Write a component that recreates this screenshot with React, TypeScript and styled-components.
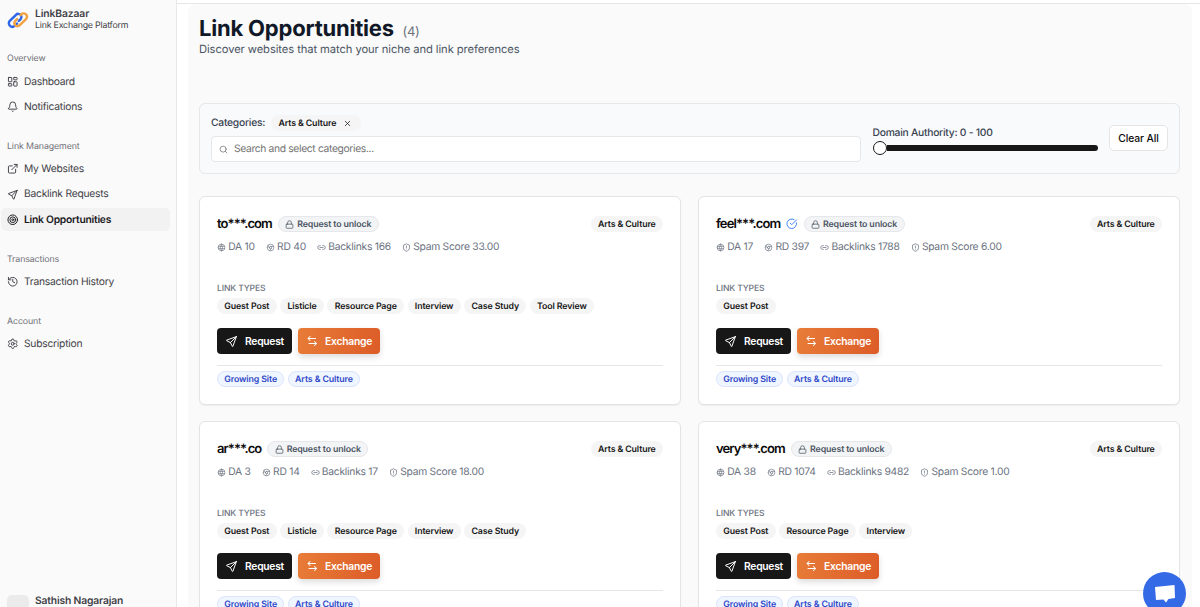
import React from 'react';
import styled, { createGlobalStyle, css } from 'styled-components';
import { Bell, CircleCheckBig, ExternalLink, LayoutDashboard, Link2, Lock, Search, Settings, ShieldAlert, Target, History, X } from 'lucide-react';
import { TbWorld, TbBrandChrome, TbSend } from 'react-icons/tb';

const GlobalStyle = createGlobalStyle`
  * {
    box-sizing: border-box;
  }
  body {
    margin: 0;
    overflow: hidden;
    font-family: Inter, 'Liberation Sans', sans-serif;
    font-size: 10.3px;
    letter-spacing: -0.25px;
    text-rendering: geometricPrecision;
    color: #0a0a0a;
    background: #fff;
  }
  svg {
    flex-shrink: 0;
  }
`;

const Layout = styled.div`
  display: flex;
  width: 1200px;
  height: 607px;
  overflow: hidden;
`;

const Sidebar = styled.aside`
  width: 177px;
  flex-shrink: 0;
  display: flex;
  flex-direction: column;
  background: #fafafa;
  border-right: 1px solid #e8e8ea;
`;

const Brand = styled.div`
  display: flex;
  align-items: center;
  gap: 6px;
  height: 39px;
  padding-left: 7px;
`;

const BrandText = styled.div`
  line-height: 12px;
  color: #3f3f46;
`;

const BrandName = styled.div`
  font-size: 10.3px;
  font-weight: 600;
  letter-spacing: -0.1px;
`;

const BrandTagline = styled.div`
  font-size: 8.8px;
  letter-spacing: -0.2px;
`;

const NavGroup = styled.div<{ $height: number }>`
  height: ${p => p.$height}px;
  padding: 9px 6px 0 1px;
`;

const NavLabel = styled.div`
  height: 22px;
  line-height: 22px;
  padding-left: 6px;
  font-size: 8.8px;
  letter-spacing: -0.1px;
  color: #707078;
`;

const NavItem = styled.div<{ $active?: boolean }>`
  display: flex;
  align-items: center;
  gap: 5.5px;
  height: 23px;
  margin-bottom: 2.4px;
  padding-left: 6px;
  border-radius: 5px;
  font-size: 10.3px;
  color: #3f3f46;
  ${p => p.$active && css`
    background: #f2f2f3;
    color: #18181b;
    font-weight: 600;
  `}
`;

const User = styled.div`
  display: flex;
  gap: 6px;
  height: 12px;
  margin-top: auto;
  padding-left: 7px;
  font-weight: 600;
  letter-spacing: -0.15px;
  line-height: 13px;
  color: #3f3f46;
`;

const Avatar = styled.div`
  width: 22px;
  height: 22px;
  border-radius: 5px;
  background: #ebebec;
`;

const Content = styled.div`
  flex: 1;
  min-width: 0;
  display: flex;
  flex-direction: column;
  border-top: 3px solid #fff;
  padding-right: 8px;
`;

const Main = styled.main`
  flex: 1;
  margin-left: 11px;
  padding: 12px 12px 0 11px;
  background: #fafafa;
  border-radius: 8px 8px 0 0;
`;

const TopLine = styled.div`
  flex-shrink: 0;
  height: 1px;
  margin-right: -8px;
  background: #e6e6e8;
`;

const Heading = styled.div`
  display: flex;
  align-items: baseline;
  gap: 8.5px;
  height: 26px;
`;

const Title = styled.h1`
  margin: 0;
  font-size: 22px;
  line-height: 26px;
  font-weight: 700;
  letter-spacing: -0.2px;
  color: #111827;
`;

const Count = styled.span`
  font-size: 13px;
  letter-spacing: -0.25px;
  color: #6b7280;
`;

const Subtitle = styled.div`
  height: 61px;
  font-size: 11.2px;
  line-height: 15px;
  letter-spacing: -0.08px;
  color: #4b5563;
`;

const Filters = styled.section`
  display: flex;
  align-items: center;
  height: 71px;
  padding: 0 11px;
  border: 1px solid #e5e7eb;
  border-radius: 6px;
  background: #f9fafb;
`;

const CategoryField = styled.div`
  width: 650px;
  flex-shrink: 0;
`;

const CategoryRow = styled.div`
  display: flex;
  align-items: center;
  gap: 7px;
  height: 16px;
  margin-bottom: 5px;
`;

const FieldLabel = styled.div`
  font-weight: 500;
  line-height: 14px;
  color: #374151;
`;

const SearchBox = styled.div`
  display: flex;
  align-items: center;
  gap: 6px;
  height: 26px;
  padding-left: 7px;
  border: 1px solid #e5e7eb;
  border-radius: 4px;
  background: #fff;
  letter-spacing: -0.35px;
  color: #737373;
`;

const RangeField = styled.div`
  flex: 1;
  margin: 4px 11px 0 11.5px;
`;

const Slider = styled.div`
  display: flex;
  align-items: center;
  height: 14px;
  margin-top: 1px;
`;

const Thumb = styled.div`
  width: 14px;
  height: 14px;
  border: 1.5px solid #171717;
  border-radius: 50%;
  background: #fff;
`;

const Track = styled.div`
  flex: 1;
  height: 6px;
  border-radius: 0 3px 3px 0;
  background: #171717;
`;

const ClearButton = styled.button`
  width: 59px;
  height: 26px;
  margin-top: -1px;
  padding: 0;
  border: 1px solid #e5e5e5;
  border-radius: 5px;
  background: #fff;
  font: 500 10.3px Inter, sans-serif;
  letter-spacing: -0.1px;
  color: #0a0a0a;
`;

const CardGrid = styled.div`
  display: grid;
  grid-template-columns: 482px 482px;
  grid-auto-rows: 209px;
  gap: 16px 17px;
  margin-top: 22px;
`;

const Card = styled.article`
  padding: 17px 17px 0;
  border: 1px solid #e4e4e7;
  border-radius: 6px;
  background: #fff;
  box-shadow: 0 1px 1px rgba(0, 0, 0, 0.05);
`;

const CardHeader = styled.div`
  display: flex;
  align-items: center;
  height: 20px;
`;

const Domain = styled.div`
  margin-right: 6px;
  font-size: 13px;
  font-weight: 600;
  letter-spacing: -0.9px;
`;

const Verified = styled(CircleCheckBig)`
  margin-right: 6px;
  color: #3b82f6;
`;

const Pill = styled.span<{ $tone?: 'blue' | 'lock' }>`
  display: inline-flex;
  align-items: center;
  gap: 3px;
  height: 16px;
  padding: 0 6.3px;
  border: 1px solid transparent;
  border-radius: 8px;
  font-size: 8.8px;
  font-weight: 600;
  letter-spacing: -0.12px;
  white-space: nowrap;
  color: #171717;
  background: #f5f5f5;
  ${p => p.$tone === 'blue' && css`
    color: #3048c8;
    background: #eff6ff;
    border-color: #dbe4fb;
  `}
  ${p => p.$tone === 'lock' && css`
    color: #4b5563;
    background: #f3f4f6;
    border-color: #e5e7eb;
  `}
`;

const FilterPill = styled(Pill)`
  gap: 7px;
  margin-left: -1px;
  padding-right: 8px;
`;

const CardCategory = styled(Pill)`
  margin-left: auto;
`;

const Stats = styled.div`
  display: flex;
  align-items: center;
  gap: 11px;
  height: 14px;
  margin-top: 6px;
  letter-spacing: -0.26px;
  color: #6b7280;
`;

const Stat = styled.span`
  display: flex;
  align-items: center;
  gap: 2.3px;
  white-space: nowrap;
`;

const LinkTypesLabel = styled.div`
  margin-top: 28px;
  height: 16px;
  line-height: 14px;
  font-size: 8.6px;
  font-weight: 500;
  letter-spacing: -0.15px;
  color: #6b7280;
`;

const PillRow = styled.div`
  display: flex;
  gap: 3.5px;
  height: 16px;
`;

const Actions = styled.div`
  display: flex;
  gap: 6px;
  height: 38px;
  margin: 14px 0 5px;
  border-bottom: 1px solid #e5e7eb;
`;

const ActionButton = styled.button<{ $exchange?: boolean }>`
  display: flex;
  align-items: center;
  justify-content: space-between;
  width: ${p => (p.$exchange ? 82 : 75)}px;
  height: 26px;
  padding: 0 8px;
  border: 0;
  border-radius: 4px;
  font: 600 10.3px Inter, sans-serif;
  letter-spacing: -0.25px;
  color: #fff;
  background: #171717;
  ${p => p.$exchange && css`
    background: linear-gradient(100deg, #e87c38, #dc5c28);
    box-shadow: 0 3px 6px rgba(0, 0, 0, 0.14);
  `}
`;

const ChatButton = styled.button`
  position: fixed;
  left: 1143px;
  top: 572px;
  display: grid;
  place-items: center;
  width: 43px;
  height: 43px;
  padding: 0;
  border: 0;
  border-radius: 50%;
  background: #356ae6;
`;

const Logo = () => (
  <svg width="22" height="18" viewBox="0 0 22 18" fill="none" strokeWidth="2.5" strokeLinecap="round" strokeLinejoin="round">
    <path d="M10 12.6 7.7 14.8C6.4 16 4.3 16 3 14.8 1.5 13.3 1.5 11.2 2.8 9.9L9 3.8C10.3 2.5 12.5 2.6 13.6 3.9 14.7 5.2 14.5 7.2 13.4 8.3L11.8 9.9" stroke="#2f66e8" />
    <path d="M13.5 4.2 14.2 3.5C15.5 2.2 17.7 2.2 19 3.4 20.3 4.7 20.3 6.8 19 8.1L12.8 14.2C11.5 15.5 9.3 15.5 8.2 14.2 7.2 12.9 7.3 11 8.3 9.9L10 8.2" stroke="#f2a444" />
  </svg>
);

const ExchangeIcon = () => (
  <svg width="12" height="12" viewBox="0 0 24 24" fill="none" stroke="currentColor" strokeWidth="2.1" strokeLinecap="round" strokeLinejoin="round">
    <path d="M8 3 4 7l4 4M4 7h15M17 13l4 4-4 4M21 17H6" />
  </svg>
);

const navGroups = [
  {
    label: 'Overview',
    height: 87.6,
    items: [
      { label: 'Dashboard', icon: LayoutDashboard },
      { label: 'Notifications', icon: Bell },
    ],
  },
  {
    label: 'Link Management',
    height: 113,
    items: [
      { label: 'My Websites', icon: ExternalLink },
      { label: 'Backlink Requests', icon: TbSend },
      { label: 'Link Opportunities', icon: Target, active: true },
    ],
  },
  {
    label: 'Transactions',
    height: 62,
    items: [{ label: 'Transaction History', icon: History }],
  },
  {
    label: 'Account',
    height: 62,
    items: [{ label: 'Subscription', icon: Settings }],
  },
];

const sites = [
  {
    domain: 'to***.com', da: 10, rd: 40, backlinks: 166, spam: '33.00',
    types: ['Guest Post', 'Listicle', 'Resource Page', 'Interview', 'Case Study', 'Tool Review'],
  },
  { domain: 'feel***.com', verified: true, da: 17, rd: 397, backlinks: 1788, spam: '6.00', types: ['Guest Post'] },
  {
    domain: 'ar***.co', da: 3, rd: 14, backlinks: 17, spam: '18.00',
    types: ['Guest Post', 'Listicle', 'Resource Page', 'Interview', 'Case Study'],
  },
  { domain: 'very***.com', da: 38, rd: 1074, backlinks: 9482, spam: '1.00', types: ['Guest Post', 'Resource Page', 'Interview'] },
];

function SiteCard({ site }: { site: typeof sites[number] }) {
  return (
    <Card>
      <CardHeader>
        <Domain>{site.domain}</Domain>
        {site.verified && <Verified size={11.5} />}
        <Pill $tone="lock"><Lock size={9} />Request to unlock</Pill>
        <CardCategory>Arts &amp; Culture</CardCategory>
      </CardHeader>
      <Stats>
        <Stat><TbWorld size={9} strokeWidth={1.7} />DA {site.da}</Stat>
        <Stat><TbBrandChrome size={9} strokeWidth={1.7} />RD {site.rd}</Stat>
        <Stat><Link2 size={9} />Backlinks {site.backlinks}</Stat>
        <Stat><ShieldAlert size={9} />Spam Score {site.spam}</Stat>
      </Stats>
      <LinkTypesLabel>LINK TYPES</LinkTypesLabel>
      <PillRow>
        {site.types.map(type => <Pill key={type}>{type}</Pill>)}
      </PillRow>
      <Actions>
        <ActionButton><TbSend size={13} strokeWidth={1.8} />Request</ActionButton>
        <ActionButton $exchange><ExchangeIcon />Exchange</ActionButton>
      </Actions>
      <PillRow>
        <Pill $tone="blue">Growing Site</Pill>
        <Pill $tone="blue">Arts &amp; Culture</Pill>
      </PillRow>
    </Card>
  );
}

function App() {
  return (
    <Layout>
      <GlobalStyle />
      <Sidebar>
        <Brand>
          <Logo />
          <BrandText>
            <BrandName>LinkBazaar</BrandName>
            <BrandTagline>Link Exchange Platform</BrandTagline>
          </BrandText>
        </Brand>
        {navGroups.map(group => (
          <NavGroup key={group.label} $height={group.height}>
            <NavLabel>{group.label}</NavLabel>
            {group.items.map(item => (
              <NavItem key={item.label} $active={'active' in item}>
                <item.icon size={11.5} />
                {item.label}
              </NavItem>
            ))}
          </NavGroup>
        ))}
        <User>
          <Avatar />
          Sathish Nagarajan
        </User>
      </Sidebar>
      <Content>
        <TopLine />
        <Main>
          <Heading>
            <Title>Link Opportunities</Title>
            <Count>(4)</Count>
          </Heading>
          <Subtitle>Discover websites that match your niche and link preferences</Subtitle>
          <Filters>
            <CategoryField>
              <CategoryRow>
                <FieldLabel>Categories:</FieldLabel>
                <FilterPill>Arts &amp; Culture <X size={9} /></FilterPill>
              </CategoryRow>
              <SearchBox><Search size={9} />Search and select categories...</SearchBox>
            </CategoryField>
            <RangeField>
              <FieldLabel>Domain Authority: 0 - 100</FieldLabel>
              <Slider>
                <Thumb />
                <Track />
              </Slider>
            </RangeField>
            <ClearButton>Clear All</ClearButton>
          </Filters>
          <CardGrid>
            {sites.map(site => <SiteCard key={site.domain} site={site} />)}
          </CardGrid>
        </Main>
      </Content>
      <ChatButton>
        <svg width="20" height="18" viewBox="0 0 20 18">
          <path d="M0 2 19.5 0 20 13 13.5 14 11 17.5 8.5 14.5 1 15Z" fill="#fff" />
        </svg>
      </ChatButton>
    </Layout>
  );
}

export default App;
